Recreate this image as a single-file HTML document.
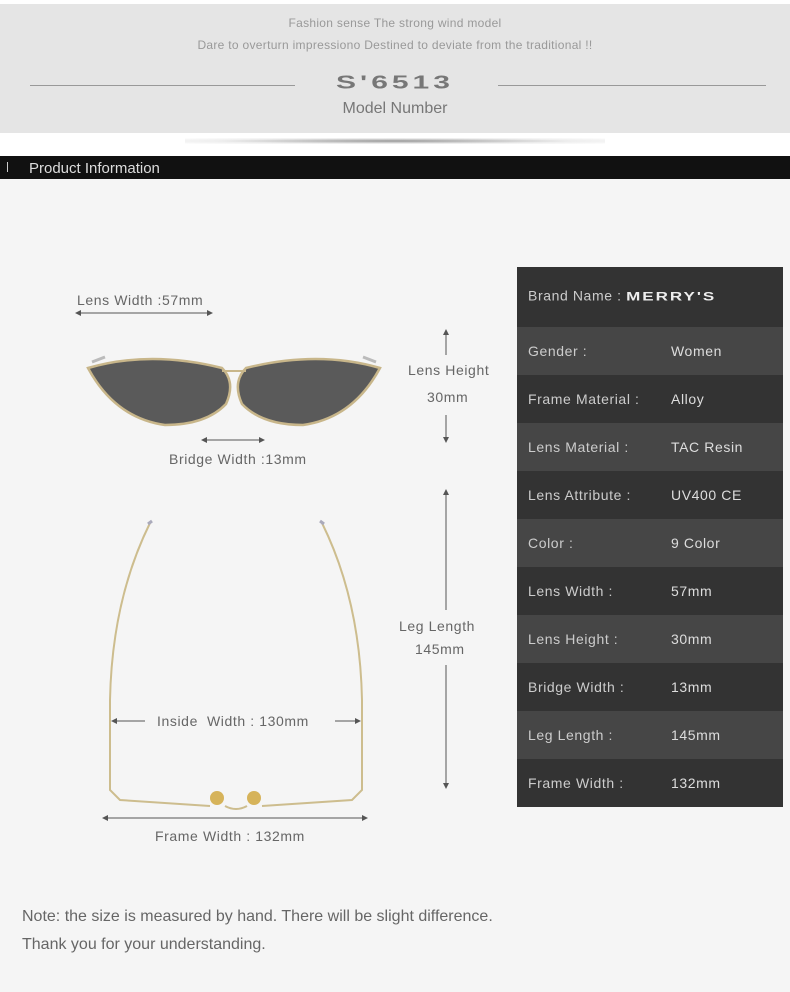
<!DOCTYPE html>
<html><head><meta charset="utf-8"><style>
*{margin:0;padding:0;box-sizing:border-box}
body{width:790px;height:992px;background:#f5f5f5;font-family:"Liberation Sans",sans-serif;position:relative;overflow:hidden}
.abs{position:absolute}
.top{left:0;top:0;width:790px;height:133px;background:#e5e5e5;border-top:4px solid #fff}
.t{color:#999;font-size:12px;width:790px;text-align:center;letter-spacing:0.3px}
.lbl{color:#666;font-size:14px;letter-spacing:0.6px;white-space:nowrap}
table{position:absolute;left:517px;top:267px;width:266px;border-collapse:collapse}
td{color:#ccc;font-size:14px;letter-spacing:0.6px;padding-left:11px;height:48px;white-space:nowrap}
tr:nth-child(odd) td{background:#333}
tr:nth-child(even) td{background:#464646}
td.v{padding-left:0;color:#ddd}
</style></head><body>
<div class="abs" style="left:0;top:0;width:790px;height:160px;background:#fff"></div>
<div class="abs top"></div>
<div class="abs t" style="top:16px">Fashion sense The strong wind model</div>
<div class="abs t" style="top:38px">Dare to overturn impressiono Destined to deviate from the traditional !!</div>
<div class="abs" style="left:30px;top:85px;width:265px;height:1px;background:#999"></div>
<div class="abs" style="left:498px;top:85px;width:268px;height:1px;background:#999"></div>
<div class="abs" style="left:300px;top:66px;width:190px;text-align:center;font-size:30px;font-weight:bold;color:#777;letter-spacing:4px;transform:scaleY(0.6)">S'6513</div>
<div class="abs" style="left:0;top:100px;width:790px;text-align:center;font-size:16px;color:#777">Model Number</div>
<div class="abs" style="left:185px;top:138px;width:420px;height:6px;background:radial-gradient(ellipse at center,#999 0%,rgba(200,200,200,0.3) 60%,rgba(255,255,255,0) 100%)"></div>
<div class="abs" style="left:0;top:156px;width:790px;height:23px;background:#111"></div>
<div class="abs" style="left:7px;top:162px;width:1px;height:10px;background:#ccc"></div>
<div class="abs" style="left:29px;top:160px;color:#ddd;font-size:15px">Product Information</div>

<div class="abs lbl" style="left:77px;top:292px">Lens Width :57mm</div>
<div class="abs lbl" style="left:169px;top:451px">Bridge Width :13mm</div>
<div class="abs lbl" style="left:408px;top:362px">Lens Height</div>
<div class="abs lbl" style="left:427px;top:389px">30mm</div>
<div class="abs lbl" style="left:399px;top:618px">Leg Length</div>
<div class="abs lbl" style="left:415px;top:641px">145mm</div>
<div class="abs lbl" style="left:157px;top:713px">Inside&nbsp; Width : 130mm</div>
<div class="abs lbl" style="left:155px;top:828px">Frame Width : 132mm</div>

<svg class="abs" style="left:0;top:0" width="790" height="992">
<defs><marker id="a" markerWidth="6" markerHeight="6" refX="5" refY="3" orient="auto"><path d="M0,0L6,3L0,6z" fill="#555"/></marker></defs>
<g stroke="#555" stroke-width="1" marker-end="url(#a)" fill="none">
<line x1="140" y1="313" x2="212" y2="313"/><line x1="150" y1="313" x2="76" y2="313"/>
<line x1="234" y1="440" x2="264" y2="440"/><line x1="234" y1="440" x2="202" y2="440"/>
<line x1="446" y1="355" x2="446" y2="330"/><line x1="446" y1="415" x2="446" y2="442"/>
<line x1="446" y1="610" x2="446" y2="490"/><line x1="446" y1="665" x2="446" y2="788"/>
<line x1="145" y1="721" x2="112" y2="721"/><line x1="335" y1="721" x2="360" y2="721"/>
<line x1="240" y1="818" x2="367" y2="818"/><line x1="240" y1="818" x2="103" y2="818"/>
</g>
<g>
<path d="M88,368 Q150,350 222,368 Q236,382 226,404 Q206,425 165,425 Q115,418 88,368z" fill="#5a5a5a" stroke="#c8b68a" stroke-width="2.5"/>
<path d="M380,368 Q318,350 246,368 Q232,382 242,404 Q262,425 303,425 Q353,418 380,368z" fill="#5a5a5a" stroke="#c8b68a" stroke-width="2.5"/>
<path d="M222,371 L246,371" stroke="#c8b68a" stroke-width="2" fill="none"/>
<path d="M105,357 L92,362 M363,357 L376,362" stroke="#bbb" stroke-width="3"/>
</g>
<g fill="none" stroke="#cdbd8e" stroke-width="2">
<path d="M150,523 Q112,600 110,700 L110,790 L120,800 L210,806"/>
<path d="M322,523 Q360,600 362,700 L362,790 L352,800 L262,806"/>
<path d="M225,806 Q236,812 247,806"/>
</g>
<circle cx="217" cy="798" r="7" fill="#d6b35a"/><circle cx="254" cy="798" r="7" fill="#d6b35a"/>
<path d="M148,524 l4,-3" stroke="#aab" stroke-width="3"/><path d="M324,524 l-4,-3" stroke="#aab" stroke-width="3"/>
</svg>

<table>
<tr><td style="height:60px" colspan="2">Brand Name : <span style="font-weight:bold;color:#eee;font-size:17px;letter-spacing:2px;display:inline-block;transform:scaleY(0.7);vertical-align:middle">MERRY'S</span></td></tr>
<tr><td style="width:154px">Gender :</td><td class="v">Women</td></tr>
<tr><td>Frame Material :</td><td class="v">Alloy</td></tr>
<tr><td>Lens Material :</td><td class="v">TAC Resin</td></tr>
<tr><td>Lens Attribute :</td><td class="v">UV400 CE</td></tr>
<tr><td>Color :</td><td class="v">9 Color</td></tr>
<tr><td>Lens Width :</td><td class="v">57mm</td></tr>
<tr><td>Lens Height :</td><td class="v">30mm</td></tr>
<tr><td>Bridge Width :</td><td class="v">13mm</td></tr>
<tr><td>Leg Length :</td><td class="v">145mm</td></tr>
<tr><td>Frame Width :</td><td class="v">132mm</td></tr>
</table>
<div class="abs" style="left:22px;top:908px;color:#666;font-size:16px">Note: the size is measured by hand. There will be slight difference.</div>
<div class="abs" style="left:22px;top:936px;color:#666;font-size:16px">Thank you for your understanding.</div>
</body></html>
